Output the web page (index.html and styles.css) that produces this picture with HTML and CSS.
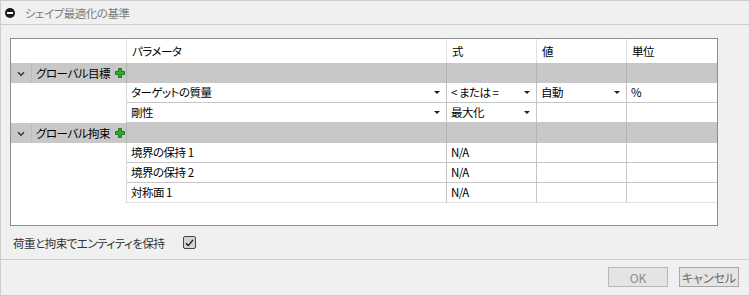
FILE: index.html
```html
<html>

<head>
  <meta charset="utf-8">
  <link rel="stylesheet" href="styles.css">
</head>

<body>
  <div class="panel">
    <!-- title bar -->
    <div class="titlebar">
      <svg class="collapse" width="10" height="10" viewBox="0 0 10 10">
        <circle cx="5" cy="5" r="5" fill="#1a1a1a"/>
        <rect x="2" y="4" width="6" height="2" fill="#fff"/>
      </svg>
      <span class="title">シェイプ最適化の基準</span>
    </div>

    <div class="content">
      <div class="grid">
        <div class="row head">
          <div class="cell"></div>
          <div class="cell">パラメータ</div>
          <div class="cell">式</div>
          <div class="cell">値</div>
          <div class="cell">単位</div>
        </div>

        <!-- global objectives -->
        <div class="row group">
          <div class="cell first">
            <span class="chev"><svg width="8" height="6" viewBox="0 0 8 6"><path d="M1 1.2 L4 4.2 L7 1.2" fill="none" stroke="#3a3a3a" stroke-width="1.6"/></svg></span>
            <span class="label">グローバル目標
              <svg class="plus" width="10" height="10" viewBox="0 0 10 10"><path d="M3.5 0.5 H6.5 V3.5 H9.5 V6.5 H6.5 V9.5 H3.5 V6.5 H0.5 V3.5 H3.5 Z" fill="#32a832" stroke="#1d7a1d" stroke-width="1"/></svg>
            </span>
          </div>
          <div class="cell"></div>
          <div class="cell"></div>
          <div class="cell"></div>
          <div class="cell"></div>
        </div>
        <div class="row data">
          <div class="cell blank"></div>
          <div class="cell drop">ターゲットの質量</div>
          <div class="cell drop">&lt; または =</div>
          <div class="cell drop">自動</div>
          <div class="cell">%</div>
        </div>
        <div class="row data">
          <div class="cell blank"></div>
          <div class="cell drop">剛性</div>
          <div class="cell drop">最大化</div>
          <div class="cell"></div>
          <div class="cell"></div>
        </div>

        <!-- global constraints -->
        <div class="row group">
          <div class="cell first">
            <span class="chev"><svg width="8" height="6" viewBox="0 0 8 6"><path d="M1 1.2 L4 4.2 L7 1.2" fill="none" stroke="#3a3a3a" stroke-width="1.6"/></svg></span>
            <span class="label">グローバル拘束
              <svg class="plus" width="10" height="10" viewBox="0 0 10 10"><path d="M3.5 0.5 H6.5 V3.5 H9.5 V6.5 H6.5 V9.5 H3.5 V6.5 H0.5 V3.5 H3.5 Z" fill="#32a832" stroke="#1d7a1d" stroke-width="1"/></svg>
            </span>
          </div>
          <div class="cell"></div>
          <div class="cell"></div>
          <div class="cell"></div>
          <div class="cell"></div>
        </div>
        <div class="row data">
          <div class="cell blank"></div>
          <div class="cell">境界の保持 1</div>
          <div class="cell">N/A</div>
          <div class="cell"></div>
          <div class="cell"></div>
        </div>
        <div class="row data">
          <div class="cell blank"></div>
          <div class="cell">境界の保持 2</div>
          <div class="cell">N/A</div>
          <div class="cell"></div>
          <div class="cell"></div>
        </div>
        <div class="row data last">
          <div class="cell blank"></div>
          <div class="cell">対称面 1</div>
          <div class="cell">N/A</div>
          <div class="cell"></div>
          <div class="cell"></div>
        </div>
      </div>

      <div class="options">
        <span>荷重と拘束でエンティティを保持</span>
        <span class="check">
          <svg width="9" height="8" viewBox="0 0 9 8"><path d="M1 4.2 L3.3 6.6 L8 0.8" fill="none" stroke="#111" stroke-width="1.3"/></svg>
        </span>
      </div>
    </div>

    <div class="footer">
      <button class="btn">OK</button>
      <button class="btn cancel">キャンセル</button>
    </div>
  </div>
</body>

</html>
```

FILE: styles.css
```css
body {
  margin: 0;
  font-family: "Noto Sans CJK JP", "Noto Sans", sans-serif;
  font-size: 11.5px;
  letter-spacing: -0.5px;
  font-feature-settings: "palt";
  color: #000;
}

.panel {
  width: 750px;
  height: 296px;
  box-sizing: border-box;
  border: 1px solid #cdcdcd;
  background: #f0f0f0;
  display: flex;
  flex-direction: column;
}

.titlebar {
  height: 23px;
  border-bottom: 1px solid #cdcdcd;
  display: flex;
  align-items: center;
  padding-left: 4px;
}

.collapse {
  margin-right: 10px;
  margin-top: 1px;
}

.title {
  color: #7c7c7c;
}

.content {
  padding: 13px 31px 0 9px;
}

.grid {
  width: 708px;
  height: 188px;
  box-sizing: border-box;
  border: 1px solid #8d8d8d;
  background: #fff;
}

.row {
  display: grid;
  grid-template-columns: 116px 320px 90px 90px 90px;
  height: 20px;
}

.cell {
  box-sizing: border-box;
  border-right: 1px solid #c4c4c4;
  padding-left: 4px;
  line-height: 19px;
  white-space: nowrap;
  position: relative;
}

.cell:last-child {
  border-right: none;
}

.head {
  height: 24px;
}

.head .cell {
  border-right-color: #e2e2e2;
  line-height: 24px;
  padding-left: 5px;
}

.group {
  background: #c8c8c8;
}

.group .cell {
  border-right-color: #b4b4b4;
  line-height: 20px;
}

.group .first {
  display: flex;
  padding-left: 0;
}

.chev {
  width: 20px;
  display: flex;
  align-items: center;
  justify-content: center;
  padding-top: 1px;
}

.label {
  flex: 1;
  border-left: 1px solid #bcbcbc;
  padding-left: 4px;
  display: flex;
  align-items: center;
}

.plus {
  margin-left: 5px;
  margin-top: -1px;
}

.data .cell {
  border-bottom: 1px solid #c6c6c6;
}

.data.last .cell {
  border-bottom-color: #e2e2e2;
}

.data .cell.blank {
  border-bottom: none;
  border-right: 1px solid #d6d6d6;
}

.drop::after {
  content: "";
  position: absolute;
  right: 6px;
  top: 8px;
  border-left: 3px solid transparent;
  border-right: 3px solid transparent;
  border-top: 3px solid #222;
}

.options {
  height: 33px;
  display: flex;
  align-items: center;
  padding-left: 3px;
  color: #333;
}

.check {
  width: 13px;
  height: 13px;
  box-sizing: border-box;
  border: 1px solid #444;
  border-radius: 2px;
  background: #d4d4d4;
  margin-left: 19px;
  display: flex;
  align-items: center;
  justify-content: center;
}

.footer {
  border-top: 1px solid #cdcdcd;
  flex: 1;
  display: flex;
  justify-content: flex-end;
  align-items: flex-start;
  padding: 7px 10px 0 0;
  gap: 11px;
}

.btn {
  width: 60px;
  height: 20px;
  border: 1px solid #b8b8b8;
  background: #e4e4e4;
  color: #8c8c8c;
  font-family: inherit;
  font-size: 12px;
  font-feature-settings: "palt";
  white-space: nowrap;
  padding: 0;
}

.cancel {
  border-color: #a8a8a8;
  color: #6c6c6c;
}
```
